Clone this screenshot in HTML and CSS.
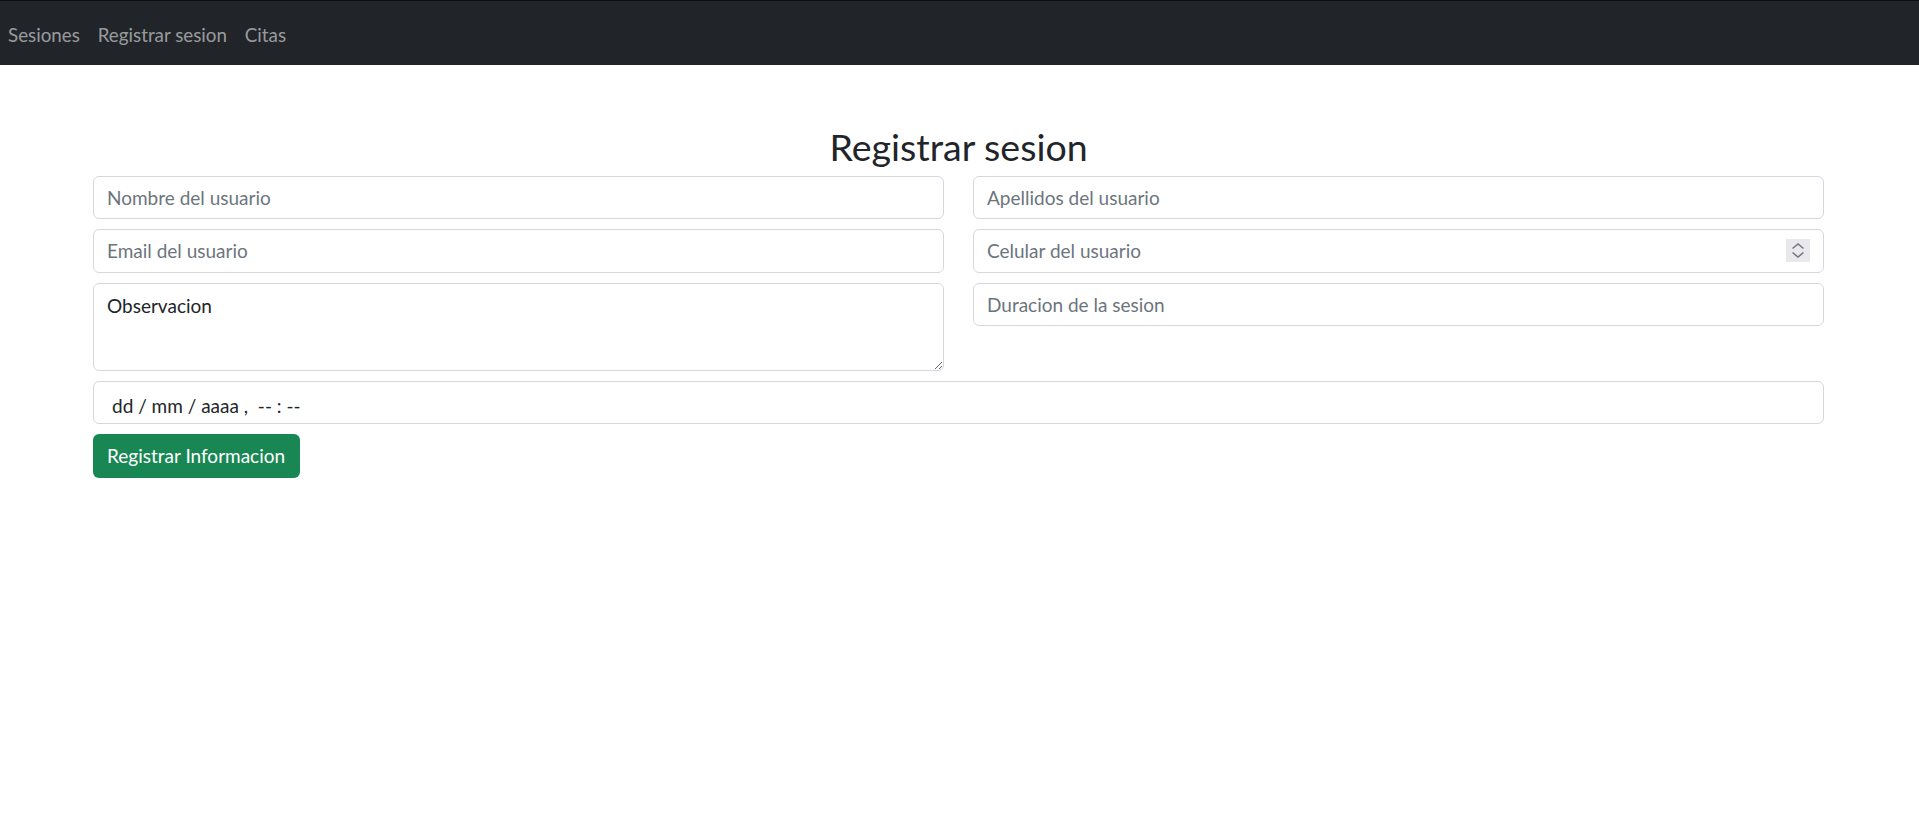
FILE: index.html
```html
<!DOCTYPE html>
<html lang="es">
<head>
<meta charset="utf-8">
<title>Registrar sesion</title>
<link rel="stylesheet" href="styles.css">
</head>
<body>
<nav class="navbar">
  <a class="nav-link" href="#">Sesiones</a>
  <a class="nav-link" href="#">Registrar sesion</a>
  <a class="nav-link" href="#">Citas</a>
</nav>
<main class="page">
  <h2 class="title">Registrar sesion</h2>
  <form class="form-grid">
    <input class="form-control" type="text" placeholder="Nombre del usuario">
    <input class="form-control" type="text" placeholder="Apellidos del usuario">
    <input class="form-control" type="email" placeholder="Email del usuario">
    <div class="number-field">
      <input class="form-control" type="text" placeholder="Celular del usuario">
      <span class="spinner">
        <svg width="24" height="23" viewBox="0 0 24 23"><path d="M6.5 9.5 L12 5 L17.5 9.5" fill="none" stroke="#74747c" stroke-width="1.5"/><path d="M6.5 13.5 L12 18 L17.5 13.5" fill="none" stroke="#74747c" stroke-width="1.5"/></svg>
      </span>
    </div>
    <textarea class="form-control textarea">Observacion</textarea>
    <input class="form-control" type="text" placeholder="Duracion de la sesion">
    <div class="form-control date-field">dd / mm / aaaa ,&nbsp; -- : --</div>
  </form>
  <button class="btn-success" type="button">Registrar Informacion</button>
</main>
</body>
</html>
```
FILE: styles.css
```css
* { box-sizing: border-box; }
body {
  margin: 0;
  font-family: Lato, "Open Sans", sans-serif;
  color: #212529;
  background: #fff;
}
.navbar {
  height: 65px;
  background: #212529;
  border-top: 1px solid #0e0f11;
  display: flex;
  align-items: flex-start;
  padding: 19.5px 0 0 8px;
}
.nav-link {
  color: rgba(255, 255, 255, 0.55);
  text-decoration: none;
  font-size: 18.8px;
  line-height: 28.5px;
  margin-right: 17.8px;
}
.page {
  padding: 0 95px 0 93px;
}
.title {
  margin: 58.5px 0 7px;
  font-size: 37.5px;
  font-weight: 400;
  line-height: 1.2;
  text-align: center;
}
.form-grid {
  display: grid;
  grid-template-columns: 1fr 1fr;
  column-gap: 29px;
  row-gap: 10px;
  align-items: start;
}
.form-control {
  display: block;
  width: 100%;
  height: 43.5px;
  padding: 6px 13px;
  font-family: inherit;
  font-size: 19px;
  line-height: 1.5;
  color: #212529;
  background: #fff;
  border: 1px solid #d5d8dc;
  border-radius: 6px;
  outline: none;
}
.form-control::placeholder { color: #6c757d; }
.number-field { position: relative; }
.spinner {
  position: absolute;
  right: 14px;
  top: 10px;
  width: 24px;
  height: 23px;
  background: #e9e9ed;
  display: block;
}
.spinner svg { display: block; }
.textarea {
  height: 88px;
  padding-top: 8.5px;
  resize: vertical;
}
.date-field {
  grid-column: 1 / 3;
  padding: 10px 13px 0 18px;
  white-space: pre;
  line-height: 28.5px;
}
.btn-success {
  margin-top: 10px;
  height: 43.5px;
  width: 207px;
  padding: 0 14px;
  background: #198754;
  color: #fff;
  border: none;
  border-radius: 6px;
  font-family: inherit;
  font-size: 19px;
  text-align: left;
  cursor: pointer;
}
```
